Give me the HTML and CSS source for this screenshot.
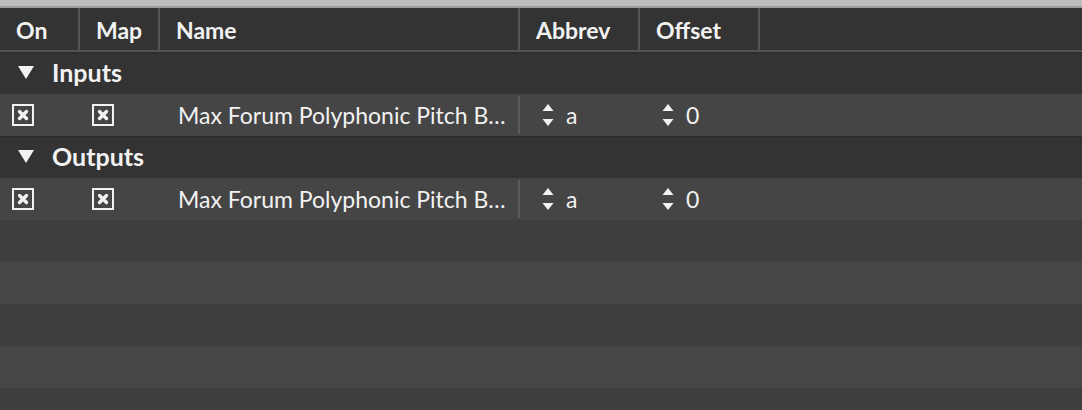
FILE: index.html
```html
<!DOCTYPE html>
<html>
<head>
<meta charset="utf-8">
<link rel="stylesheet" href="styles.css">
</head>
<body>
<div class="topbar"></div>
<div class="table">
  <div class="head">
    <div class="c c-on">On</div>
    <div class="c c-map">Map</div>
    <div class="c c-name">Name</div>
    <div class="c c-abbr">Abbrev</div>
    <div class="c c-off">Offset</div>
    <div class="c c-rest"></div>
  </div>
  <div class="group">
    <svg class="tri" width="16" height="14" viewBox="0 0 16 14"><polygon points="0,0 16,0 8,13" fill="#f2f2f2"/></svg>
    <span>Inputs</span>
  </div>
  <div class="row data">
    <div class="d d-on"><span class="cb"><svg width="12" height="12" viewBox="0 0 12 12"><path d="M2.5 2.5 L9.5 9.5 M9.5 2.5 L2.5 9.5" stroke="#f2f2f2" stroke-width="3.4" stroke-linecap="round"/></svg></span></div>
    <div class="d d-map"><span class="cb"><svg width="12" height="12" viewBox="0 0 12 12"><path d="M2.5 2.5 L9.5 9.5 M9.5 2.5 L2.5 9.5" stroke="#f2f2f2" stroke-width="3.4" stroke-linecap="round"/></svg></span></div>
    <div class="d d-name">Max Forum Polyphonic Pitch B…</div>
    <div class="d d-abbr"><svg class="spin" width="12" height="24" viewBox="0 0 12 24"><polygon points="6,1 11.5,8 0.5,8" fill="#f2f2f2"/><polygon points="0.5,16 11.5,16 6,23" fill="#f2f2f2"/></svg><span>a</span></div>
    <div class="d d-off"><svg class="spin" width="12" height="24" viewBox="0 0 12 24"><polygon points="6,1 11.5,8 0.5,8" fill="#f2f2f2"/><polygon points="0.5,16 11.5,16 6,23" fill="#f2f2f2"/></svg><span>0</span></div>
  </div>
  <div class="group">
    <svg class="tri" width="16" height="14" viewBox="0 0 16 14"><polygon points="0,0 16,0 8,13" fill="#f2f2f2"/></svg>
    <span>Outputs</span>
  </div>
  <div class="row data">
    <div class="d d-on"><span class="cb"><svg width="12" height="12" viewBox="0 0 12 12"><path d="M2.5 2.5 L9.5 9.5 M9.5 2.5 L2.5 9.5" stroke="#f2f2f2" stroke-width="3.4" stroke-linecap="round"/></svg></span></div>
    <div class="d d-map"><span class="cb"><svg width="12" height="12" viewBox="0 0 12 12"><path d="M2.5 2.5 L9.5 9.5 M9.5 2.5 L2.5 9.5" stroke="#f2f2f2" stroke-width="3.4" stroke-linecap="round"/></svg></span></div>
    <div class="d d-name">Max Forum Polyphonic Pitch B…</div>
    <div class="d d-abbr"><svg class="spin" width="12" height="24" viewBox="0 0 12 24"><polygon points="6,1 11.5,8 0.5,8" fill="#f2f2f2"/><polygon points="0.5,16 11.5,16 6,23" fill="#f2f2f2"/></svg><span>a</span></div>
    <div class="d d-off"><svg class="spin" width="12" height="24" viewBox="0 0 12 24"><polygon points="6,1 11.5,8 0.5,8" fill="#f2f2f2"/><polygon points="0.5,16 11.5,16 6,23" fill="#f2f2f2"/></svg><span>0</span></div>
  </div>
  <div class="row empty odd"></div>
  <div class="row empty even"></div>
  <div class="row empty odd"></div>
  <div class="row empty even"></div>
  <div class="row empty odd"></div>
</div>
</body>
</html>
```
FILE: styles.css
```css
html, body {
  margin: 0;
  padding: 0;
  background: #3e3e3e;
  overflow: hidden;
}
body {
  width: 1082px;
  height: 410px;
  font-family: Lato, "Open Sans", sans-serif;
  color: #f2f2f2;
}
.topbar {
  height: 6px;
  background: #bdbdbd;
  border-bottom: 2px solid #9c9c9c;
}
.table {
  display: flex;
  flex-direction: column;
}
.head {
  display: flex;
  height: 42px;
  background: #333333;
  border-bottom: 2px solid #555555;
  font-weight: 700;
  font-size: 23px;
}
.head .c {
  display: flex;
  align-items: center;
  padding-left: 16px;
  box-sizing: border-box;
  border-right: 2px solid #555555;
  padding-top: 1px;
}
.c-on { width: 80px; }
.c-map { width: 80px; }
.c-name { width: 360px; }
.c-abbr { width: 120px; }
.c-off { width: 120px; }
.head .c-rest { flex: 1; border-right: none; }
.group {
  display: flex;
  align-items: center;
  height: 42px;
  background: #333333;
  border-top: 1px solid #2b2b2b;
  box-sizing: border-box;
  font-weight: 700;
  font-size: 25px;
  padding-left: 18px;
  padding-bottom: 3px;
  gap: 18px;
}
.group .tri { margin-top: 2px; }
.row {
  height: 42px;
  display: flex;
}
.data {
  background: #454545;
  align-items: center;
  font-size: 23px;
}
.d {
  display: flex;
  align-items: center;
  box-sizing: border-box;
  height: 100%;
}
.d-on { width: 80px; padding-left: 12px; }
.d-map { width: 80px; padding-left: 12px; }
.d-name {
  width: 360px;
  padding-left: 18px;
  border-right: 2px solid #5c5c5c;
  height: 38px;
  white-space: nowrap;
}
.d-abbr { width: 120px; padding-left: 22px; gap: 12px; }
.d-off { width: 120px; padding-left: 22px; gap: 12px; }
.cb {
  width: 22px;
  height: 22px;
  box-sizing: border-box;
  border: 2px solid #f2f2f2;
  display: flex;
  align-items: center;
  justify-content: center;
}
.cb svg { display: block; }
.spin { display: block; }
.odd { background: #3e3e3e; }
.even { background: #464646; }
```
